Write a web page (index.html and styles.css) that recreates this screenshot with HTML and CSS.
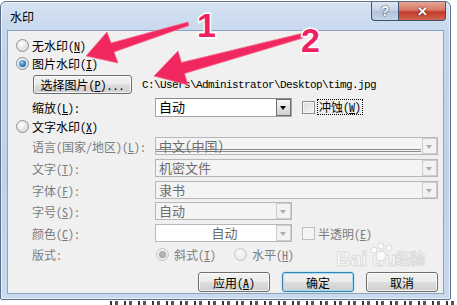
FILE: index.html
```html
<!DOCTYPE html>
<html lang="zh-CN">
<head>
    <meta charset="UTF-8">
    <title>水印</title>
    <link rel="stylesheet" href="styles.css">
</head>
<body>
    <div class="window">
        <div class="titlebar">
            <span class="title">水印</span>
            <div class="caption-btns">
                <span class="btn-help">?</span>
                <span class="btn-close">✕</span>
            </div>
        </div>
        <div class="client">
            <div class="row radio-row r1">
                <span class="radio"></span><span>无水印(<u>N</u>)</span>
            </div>
            <div class="row radio-row r2">
                <span class="radio on"></span><span>图片水印(<u>I</u>)</span>
            </div>
            <div class="row pick-row r3">
                <span class="push pick">选择图片(<u>P</u>)...</span>
                <span class="path">C:\Users\Administrator\Desktop\timg.jpg</span>
            </div>
            <div class="row field r4">
                <span>缩放(<u>L</u>):</span>
                <div class="combo"><span class="val">自动</span><span class="drop"></span></div>
                <div class="check-wrap">
                    <span class="check"></span><span class="focus">冲蚀(<u>W</u>)</span>
                </div>
            </div>
            <div class="row radio-row r5">
                <span class="radio"></span><span>文字水印(<u>X</u>)</span>
            </div>
            <div class="row field dis r6">
                <span>语言(国家/地区)(<u>L</u>):</span>
                <div class="combo wide off lang"><span class="val">中文(中国)</span><span class="drop"></span></div>
            </div>
            <div class="row field dis r7">
                <span>文字(<u>T</u>):</span>
                <div class="combo wide off"><span class="val">机密文件</span><span class="drop"></span></div>
            </div>
            <div class="row field dis r8">
                <span>字体(<u>F</u>):</span>
                <div class="combo wide off"><span class="val">隶书</span><span class="drop"></span></div>
            </div>
            <div class="row field dis r9">
                <span>字号(<u>S</u>):</span>
                <div class="combo off"><span class="val">自动</span><span class="drop"></span></div>
            </div>
            <div class="row field dis r10">
                <span>颜色(<u>C</u>):</span>
                <div class="combo off white"><span class="val center">自动</span><span class="drop"></span></div>
                <div class="check-wrap">
                    <span class="check off"></span><span>半透明(<u>E</u>)</span>
                </div>
            </div>
            <div class="row field dis r11">
                <span>版式:</span>
                <div class="layout-opts">
                    <span class="radio on off"></span><span class="opt">斜式(<u>I</u>)</span>
                    <span class="radio off"></span><span>水平(<u>H</u>)</span>
                </div>
            </div>
            <div class="row actions">
                <span class="push">应用(<u>A</u>)</span>
                <span class="push default">确定</span>
                <span class="push">取消</span>
            </div>
        </div>
    </div>
    <div class="desk-strip"></div>

    <!-- annotation arrows drawn over the dialog -->
    <svg class="annot" width="457" height="305" viewBox="0 0 457 305">
        <g class="watermark">
            <text x="336" y="266">Bai</text>
            <text x="372" y="266">du</text>
            <text x="395" y="264" class="wm-cn">经验</text>
            <circle cx="374" cy="250" r="3"/><circle cx="381" cy="246" r="3"/>
            <circle cx="389" cy="248" r="3"/><circle cx="381" cy="256" r="5"/>
        </g>
        <polygon class="arrow" points="86,56 118,63 114,52 189,25.5 188,22 111,43 107,32"/>
        <polygon class="arrow" points="154,76 188,85 184.5,73.5 303,38 301.5,33.5 181.5,62.5 178,51"/>
        <text class="num" x="197" y="37">1</text>
        <text class="num" x="301" y="52">2</text>
    </svg>
</body>
</html>
```

FILE: styles.css
```css
body {
    margin: 0;
    width: 457px;
    height: 305px;
    overflow: hidden;
    position: relative;
    background: #ffffff;
    font-family: "Noto Sans CJK SC", "Liberation Sans", sans-serif;
    font-size: 12px;
    font-feature-settings: "hwid" 1;
    color: #000;
}
u {
    text-decoration: underline;
    text-underline-offset: 1px;
}
.window {
    width: 451px;
    height: 299px;
    margin-top: 1px;
    border-radius: 6px 6px 2px 2px;
    border: 1px solid #5a6f8c;
    box-sizing: border-box;
    background: linear-gradient(180deg, #d6e3f2 0%, #c3d6ec 12%, #bfd2ea 60%, #c9daee 100%);
    box-shadow: inset 0 0 0 1px rgba(255,255,255,0.6);
}
.titlebar {
    height: 28px;
    display: flex;
    justify-content: space-between;
    align-items: flex-start;
}
.title {
    margin: 7px 0 0 9px;
    line-height: 16px;
}
.caption-btns {
    display: flex;
    margin-right: 4px;
    margin-top: 0;
}
.btn-help, .btn-close {
    height: 19px;
    display: flex;
    align-items: center;
    justify-content: center;
    border: 1px solid #3f536e;
    border-top: none;
    box-sizing: border-box;
    font-family: "Liberation Sans", sans-serif;
    font-weight: bold;
    color: #fff;
}
.btn-help {
    width: 27px;
    border-right: none;
    border-radius: 0 0 0 4px;
    background: linear-gradient(180deg, #dfe7f1 0%, #c4d2e3 50%, #b0c1d7 51%, #c6d5e7 100%);
    color: #f4f7fb;
    font-size: 14px;
    text-shadow: 0 0 2px #3a4d66, 0 0 1px #3a4d66;
}
.btn-close {
    width: 48px;
    border-radius: 0 0 4px 0;
    background: linear-gradient(180deg, #e8a493 0%, #d77a66 45%, #c0392b 55%, #d2674f 100%);
    font-size: 13px;
    text-shadow: 0 0 2px #5c1a12, 0 0 1px #5c1a12;
}
.client {
    margin: 0 6px;
    height: 264px;
    box-sizing: border-box;
    background: #f0f0f0;
    border: 1px solid #8ea3bf;
    padding-top: 6px;
    display: flex;
    flex-direction: column;
}
.row {
    display: flex;
    align-items: center;
    white-space: nowrap;
}
.radio-row {
    height: 16px;
    padding-left: 8px;
    gap: 3px;
}
.r2 { margin-top: 2px; }
.r3 { margin-top: 4px; }
.r4 { margin-top: 3px; }
.r5 { margin-top: 1px; }
.r6 { margin-top: 3px; }
.r7, .r8 { margin-top: 4px; }
.r9, .r10 { margin-top: 3px; }
.r11 { margin-top: 3px; }

.radio {
    width: 11px;
    height: 11px;
    border-radius: 50%;
    border: 1px solid #8e8f8f;
    background: radial-gradient(circle at 40% 35%, #ffffff 0%, #e6e6e6 50%, #cfcfcf 100%);
    position: relative;
    flex: none;
}
.radio.on::after {
    content: "";
    position: absolute;
    left: 2px;
    top: 2px;
    width: 7px;
    height: 7px;
    border-radius: 50%;
    background: radial-gradient(circle at 40% 35%, #9fd2f2 0%, #2e7fbf 55%, #1d4f86 100%);
}
.radio.off {
    border-color: #c6c6c6;
    background: radial-gradient(circle at 40% 35%, #fafafa 0%, #eaeaea 60%, #dedede 100%);
}
.radio.on.off::after {
    background: radial-gradient(circle, #bdbdbd 0%, #9a9a9a 100%);
}

.pick-row {
    height: 19px;
    padding-left: 25px;
    gap: 10px;
}
.push {
    display: flex;
    align-items: center;
    justify-content: center;
    box-sizing: border-box;
    border: 1px solid #707070;
    border-radius: 3px;
    background: linear-gradient(180deg, #f2f2f2 0%, #ebebeb 48%, #dddddd 52%, #cfcfcf 100%);
    box-shadow: inset 0 0 0 1px rgba(255,255,255,0.7);
}
.pick {
    width: 99px;
    height: 19px;
}
.path {
    font-family: "Liberation Mono", monospace;
    font-size: 11px;
    letter-spacing: -0.6px;
}

.field {
    padding-left: 24px;
    display: grid;
    grid-template-columns: 123px max-content max-content;
    justify-content: start;
    align-items: center;
}
.r4, .r10 { height: 20px; }
.r6, .r7, .r8, .r9 { height: 18px; }
.r11 { height: 16px; }
.dis { color: #7c7c7c; }

.combo {
    width: 137px;
    height: 18px;
    box-sizing: border-box;
    border: 1px solid #a5a5a5;
    border-top-color: #8a8a8a;
    background: #fff;
    display: flex;
    align-items: stretch;
    color: #000;
}
.combo .val {
    flex: 1;
    padding-left: 3px;
    line-height: 16px;
    font-size: 13px;
}
.combo .val.center {
    text-align: center;
    padding-left: 18px;
}
.combo .drop {
    width: 15px;
    margin: 0 0 0 1px;
    box-sizing: border-box;
    border: 1px solid #6e6e6e;
    background: linear-gradient(180deg, #f6f6f6 0%, #e4e4e4 50%, #cfcfcf 100%);
    position: relative;
}
.combo .drop::after {
    content: "";
    position: absolute;
    left: 3px;
    top: 6px;
    border-left: 3.5px solid transparent;
    border-right: 3.5px solid transparent;
    border-top: 4px solid #000;
}
.r4 .combo {
    height: 19px;
}
.combo.wide {
    width: 283px;
}
.combo.off {
    border-color: #b7b7b7;
    background: #f4f4f4;
    color: #6d6d6d;
}
.combo.off.white {
    background: #fff;
}
.combo.off .drop {
    border-color: #cdcdcd;
    background: #f2f2f2;
}
.combo.off .drop::after {
    border-top-color: #adadad;
}
.combo.lang .val {
    box-shadow: inset 0 -2px 0 #f4f4f4, inset 0 -3px 0 #8c8c8c, inset 0 -4px 0 #f4f4f4, inset 0 -5px 0 #8c8c8c;
}

.check-wrap {
    display: flex;
    align-items: center;
    margin-left: 10px;
    gap: 3px;
}
.check {
    width: 11px;
    height: 11px;
    border: 1px solid #8e8f8f;
    background: linear-gradient(135deg, #dcdcdc 0%, #f6f6f6 100%);
    box-shadow: inset 0 0 0 1px #f4f4f4;
}
.check.off {
    border-color: #c0c0c0;
    background: #f4f4f4;
}
.focus {
    outline: 1px dotted #000;
    outline-offset: 0;
    padding: 0 1px;
    line-height: 14px;
}

.layout-opts {
    display: flex;
    align-items: center;
    padding-left: 1px;
    gap: 5px;
}
.layout-opts .opt {
    margin-right: 13px;
}

.actions {
    margin-top: 10px;
    justify-content: flex-end;
    padding-right: 5px;
    gap: 12px;
}
.actions .push {
    width: 72px;
    height: 20px;
}
.push.default {
    border-color: #3c7fb1;
    box-shadow: inset 0 0 0 1px #9fdcf6, 0 0 2px #8fcbe8;
}

.desk-strip {
    margin: 1px 0 0 110px;
    height: 4px;
    background: repeating-linear-gradient(90deg, #333 0 2px, #fff 2px 5px, #555 5px 8px, #fff 8px 14px);
}

.annot {
    position: absolute;
    left: 0;
    top: 0;
    pointer-events: none;
}
.arrow {
    fill: #f0285f;
    stroke: #f56a8e;
    stroke-width: 0.8;
}
.num {
    font-family: "Liberation Sans", sans-serif;
    font-weight: bold;
    font-size: 34px;
    fill: #ee1f62;
    stroke: #ffffff;
    stroke-width: 3px;
    paint-order: stroke;
}
.watermark text {
    font-family: "Liberation Sans", sans-serif;
    font-weight: bold;
    font-size: 20px;
    fill: #ffffff;
    stroke: #d4d4d4;
    stroke-width: 1px;
    opacity: 0.75;
}
.watermark .wm-cn {
    font-family: "Noto Sans CJK SC", sans-serif;
    font-size: 15px;
}
.watermark circle {
    fill: #ffffff;
    stroke: #d4d4d4;
    stroke-width: 1px;
    opacity: 0.75;
}
```
